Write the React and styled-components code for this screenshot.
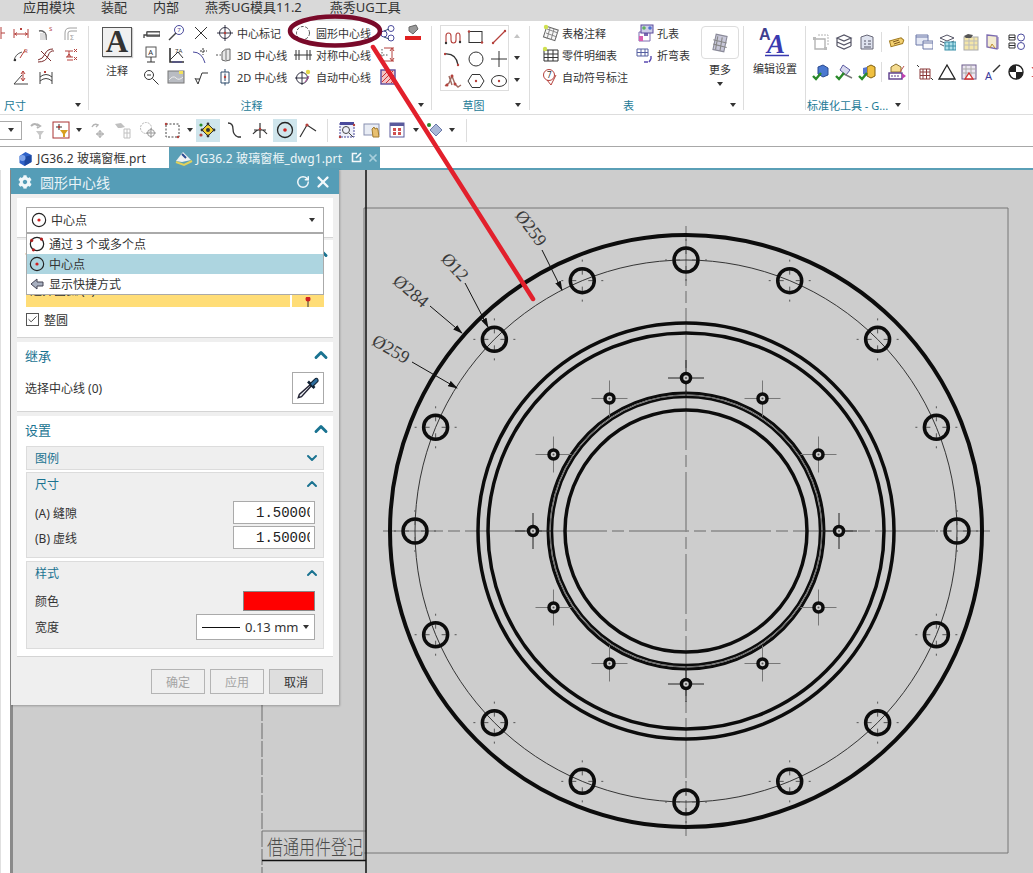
import React from "react";
import styled, { createGlobalStyle } from "styled-components";
import { FaCog } from "react-icons/fa";
import { RotateCw, X, Check, ChevronUp, ChevronDown } from "lucide-react";

const R = "#b5413c";
const B = "#4a4a9c";
const G = "#a0a0a0";
const D = "#333";
const P = "#7c6bb0";

const dot = (x, y, c = R, r = 1.2) => <circle cx={x} cy={y} r={r} fill={c} stroke="none" />;

const tableLines = (c) => (
  <path stroke={c} d="M2 4h14v11H2zM2 8h14M2 11.500h14M6 4v11M11 4v11" />
);

const ICONS = {
  dimCut: <path stroke={R} d="M14 3v12M14 9h4" />,
  dimX: <><path stroke={R} d="M2 5v9M16 5v9M2 10h14M3 10l2-1.500M3 10l2 1.500M15 10l-2-1.500M15 10l-2 1.500M8 4l2 2M10 4l-2 2" /></>,
  radS: <><path stroke="#666" strokeWidth="1.500" d="M2 7q5-1 7 4v5" /><path fill="#ddd" stroke="none" d="M3 9h5l1 7H3z" /><text x="12" y="7" fontSize="6" fill={R} stroke="none">S</text></>,
  chainGrey: <><path stroke={G} d="M3 16V9q0-5 5-5h7M6 16V9q0-2 3-2h6" /><text x="8" y="16" fontSize="7" fill={G} stroke="none">Σ</text></>,
  radR: <><path stroke="#555" d="M2 15q1-7 8-9" /><path stroke={R} d="M8 12l5-8" />{dot(3, 14, D)}<text x="12" y="7" fontSize="6" fill={R} stroke="none">R</text></>,
  wave: <><path stroke="#7a2a2a" d="M1 14q5-1 7-6t8-5M1 16q8 0 10-6t6-5M4 5l10 10" /></>,
  ordinate: <><path stroke={R} d="M3 5h8M7 5v6M4 11h7M5 14h6M5 11l2-3M9 11l-2-3" /><path stroke={R} d="M12 3l3 3M15 3l-3 3M12 11l3 3M15 11l-3 3" /></>,
  angle: <><path stroke="#444" d="M2 16L10 7M2 16h14" /><path stroke={R} d="M11 3v10M9 6l2-3 2 3M9 10l2 3 2-3" /></>,
  arcdim: <><path stroke="#444" d="M3 4v12M15 4v12M3 9q6-5 12 0M3 13q6-5 12 0" /><path stroke={R} d="M7 3l2 2M9 3l-2 2" /></>,
  leader: <><path stroke="#444" strokeWidth="1.300" d="M2 14v-3h3M5 8h13v4H5z" /><path fill="#fff" stroke="#444" d="M5 8h13v3H5z" /></>,
  balloon: <><circle cx="12" cy="6" r="4.500" stroke={B} /><path stroke="#444" strokeWidth="1.500" d="M2 16l7-7" /><text x="10.200" y="8" fontSize="6" fill={B} stroke="none">7</text></>,
  cross: <path stroke="#333" d="M3 3l12 12M15 3L3 15" />,
  boxA: <><rect x="4" y="1" width="10" height="10" stroke="#555" /><path stroke="#333" d="M9 11v5M5 16h8" /><text x="6.300" y="9" fontSize="7.500" fill="#333" stroke="none">A</text></>,
  angled: <><path stroke="#333" strokeWidth="1.600" d="M3 2v14h14" /><path stroke="#333" d="M3 14L11 6l5 6" /><path stroke={B} d="M5 16h10" /><text x="8" y="7" fontSize="6" fill={D} stroke="none">7A</text></>,
  arcCross: <><path stroke={B} d="M1 6q9 0 12 11" /><path stroke="#333" strokeDasharray="2 1" d="M11 2v7M8 5h7" /></>,
  magnify: <><circle cx="7" cy="7" r="4.500" stroke="#333" /><path stroke="#333" d="M5 7h4M10.500 10.500l6 6" /></>,
  image: <><rect x="1" y="3" width="16" height="12" fill="#b9bcc2" stroke="#777" /><path stroke="#eee" d="M2 12q4-5 7-2t7-1" /><rect x="12" y="3" width="4" height="3" fill="#f3e25b" stroke="none" /></>,
  surface: <path stroke="#333" d="M3 10l3 6 4-11h6M4 11h4" />,
  centerMark: <><circle cx="9" cy="9" r="5.500" stroke="#334" /><path stroke="#334" d="M9 1v16M1 9h16" />{dot(9, 9, R)}</>,
  center3d: <><path stroke="#555" strokeDasharray="2 1.500" d="M0 9h5" /><path fill="#e8e8e8" stroke="#666" d="M6 6q3-4 8-3v11q-5 2-8 0z" /><path stroke="#777" d="M10 4v10" /></>,
  center2d: <><path stroke="#2d4a6a" d="M5 4h8v11H5z" /><path stroke="#2d4a6a" strokeDasharray="3 1.500" d="M9 1v17" />{dot(9, 9, R)}</>,
  dashCircle: <circle cx="9" cy="9" r="6.500" stroke="#555" strokeDasharray="3 1.600" />,
  symLine: <path stroke="#333" d="M2 4v10M5 4v10M13 4v10M16 4v10M0 9h18" />,
  autoCenter: <><circle cx="8" cy="10" r="5.500" stroke="#334" /><path stroke="#334" d="M8 3v14M1 10h14" /><path stroke="#b04a9c" d="M11 14l4-6" />{dot(14, 4, "#e5d84a", 2.200)}</>,
  nodes: <><circle cx="5" cy="10" r="3" stroke={B} /><circle cx="12" cy="4.500" r="3" stroke={B} /><circle cx="12" cy="14" r="3" stroke={B} /><path stroke="#2d4a6a" d="M5 7l5-2M5 13l5 2" /></>,
  paint: <><path fill="#9a9a9a" stroke="#666" d="M5 3l7-2 2 4-5 5-4-3z" /><rect x="1" y="12" width="16" height="4" fill="#e02020" stroke="none" /></>,
  dimV: <><path stroke="#555" strokeDasharray="1.500 1.500" d="M3 3v14M1 9h8" /><path stroke={R} d="M5 2h10M5 15h10M13 2v13M11 5l2-3 2 3M11 12l2 3 2-3" /></>,
  hatch: <><rect x="2" y="2" width="14" height="14" fill="#f4c4c4" stroke="#5a4a9c" strokeWidth="1.400" /><path stroke="#d03030" d="M3 9l6-6M3 14l11-11M7 15l8-8M12 15l3-3" /></>,
  profile: <><path stroke={R} strokeWidth="1.100" d="M2 15V8q0-3 2.500-3T7 8v4q0 3 2.500 3t2.500-3V8q0-3 2-3t2 3v6" />{dot(2, 15, D)}{dot(16, 14, D)}</>,
  rect: <><rect x="2" y="3.500" width="13" height="11" stroke="#333" />{dot(2, 3.500)}{dot(15, 14.500)}</>,
  line: <><path stroke={R} strokeWidth="1.200" d="M3 15L15 3" />{dot(3, 15)}{dot(15, 3)}</>,
  arc: <><path stroke="#333" strokeWidth="1.300" d="M1 4q11-1 13 11" />{dot(1, 4)}{dot(14, 15)}</>,
  circle: <><circle cx="9" cy="9" r="7" stroke="#333" /></>,
  plus: <path stroke="#333" d="M9 1v16M1 9h16" />,
  spline: <><path stroke="#a06a60" strokeWidth="1.400" d="M1 14l4-3 3-7 3 8 3 3 3-2M5 4l3 9" />{dot(8, 4, R, 1.500)}{dot(3, 13, R, 1.500)}{dot(11, 12, R, 1.500)}</>,
  hexagon: <><path stroke="#333" d="M5 2.500h8L17 9l-4 6.500H5L1 9z" />{dot(9, 9)}</>,
  ellipse: <><ellipse cx="9" cy="9" rx="7.500" ry="5.500" stroke="#333" />{dot(9, 9)}</>,
  tableNote: <><path fill="#f7f7f7" stroke="#666" transform="rotate(18 9 9)" d="M3 4h12v11H3z" /><path stroke="#888" d="M5 5l11 4M4 9l11 4M8 4l-3 11M12 5l-3 11" />{dot(4, 3, "#cfe050", 2.200)}</>,
  partsList: <>{tableLines("#333")}{dot(3, 3, "#cfe050", 2.200)}</>,
  balloon7: <><circle cx="7" cy="7" r="5.500" stroke={R} /><path stroke={R} d="M5 12l4 5 5-10" /><text x="5" y="10" fontSize="8" fill="#333" stroke="none">7</text></>,
  holeTable: <><path fill="#fff" stroke={P} d="M3 8h11v9H3z" /><rect x="3" y="12" width="4" height="5" fill="#d860b0" stroke="none" /><rect x="8" y="8" width="4" height="4" fill="#7c6bb0" stroke="none" /><rect x="5" y="1" width="12" height="8" fill="#cfcfe8" stroke="#5a4a9c" />{dot(8, 4, "#60b060", 1.800)}{dot(14, 4, "#5070d0", 1.800)}</>,
  bendTable: <><path stroke="#555fa0" d="M1 3h11v7H1zM1 6.500h11M5 3v7M9 3v7" /><path stroke="#5a4ab0" strokeWidth="1.400" d="M15 10v3M15 13l-2 3M8 16h4" /></>,
  moreTable: <><path fill="#c7c7d8" stroke="#8a8a99" transform="rotate(12 9 9)" d="M4 2h10v14H4z" /><path stroke="#888" d="M3 6l12 3M3 10l12 3M7 3l-2 12M11 4l-2 12" /></>,
  std1: <><path stroke="#b4b4b4" strokeWidth="1.400" d="M3 6h10v10H3z" /><path stroke="#b4b4b4" strokeDasharray="2 1" d="M6 2h10v10" /><rect x="1" y="4" width="3" height="3" fill="#bbb" stroke="none" /><rect x="12" y="14" width="3" height="3" fill="#bbb" stroke="none" /></>,
  std2: <><path stroke="#556" strokeWidth="1.200" d="M2 5l7-3 7 3-7 3zM2 9l7 3 7-3M2 13l7 3 7-3M2 5v8M16 5v8" /></>,
  std3: <><path fill="#dfe3ef" stroke="#667" d="M3 4l6-2 6 2v12H3z" /><path stroke="#556" d="M6 8h2M10 8h3M6 11h2M10 11h3M6 14h7" /></>,
  std4: <><path fill="#f3d070" stroke="#a07a20" transform="rotate(-15 9 9)" d="M2 6h12l2 3-2 3H2z" /><path stroke="#805a20" d="M5 9l6-2M6 11l6-2" /></>,
  check1: <><path fill="#4a78d0" stroke="#2a4a90" d="M6 4l5-2 5 3v7l-5 2-5-3z" /><path stroke="#2a8a2a" strokeWidth="2.400" d="M1 13l3 3 5-6" /></>,
  check2: <><path fill="#d8d8ee" stroke="#5a5aa0" d="M8 2l7 5-4 5-6-5z" /><path stroke="#777" strokeWidth="1.500" d="M7 10l10 5" /><path stroke="#2a8a2a" strokeWidth="2.400" d="M1 13l3 3 5-6" /></>,
  check3: <><path fill="#f0c040" stroke="#806010" d="M9 4l4-2 4 2v9l-4 2-4-2z" /><path fill="#5a78d0" stroke="none" d="M5 5l4-1v9l-4-2z" /><path stroke="#2a8a2a" strokeWidth="2.400" d="M1 13l3 3 5-6" /></>,
  stdBox: <><path fill="#f5dc90" stroke="#8a7030" d="M3 4l5-3 5 3v5H3z" /><rect x="1" y="10" width="13" height="6" fill="#fff" stroke="#5a3a8a" strokeWidth="1.400" /><path stroke="#5a3a8a" strokeDasharray="2 1" d="M3 13h9" /><path fill="#c040b0" stroke="none" d="M14 10l4 3-4 3z" /><path stroke="#c05050" d="M12 9l4-6" /></>,
  windows: <><path fill="#e4e8f4" stroke="#6d78a8" d="M1 2h12v10H1z" /><path fill="#f8f8fb" stroke="#6d78a8" d="M8 8h10v8H8z" /><path stroke="#6d78a8" d="M1 4h12M8 10h10" /></>,
  stackTeal: <><path stroke="#556" d="M2 5l7-3 7 3-7 3zM2 8l7 3 7-3M2 11l4 2" /><rect x="7" y="9" width="11" height="8" fill="#aee0ea" stroke="#3a90a8" /><path stroke="#3a90a8" d="M7 13h11M11 9v8M15 9v8" /></>,
  yellowTable: <><rect x="3" y="4" width="14" height="13" fill="#f4e6a8" stroke="#aaa" /><path stroke="#bbb" d="M3 8h14M3 12h14M8 4v13M13 4v13" /><path fill="#555" stroke="none" d="M3 3l4-2 5 1-2 3-5 0z" /></>,
  bookmark: <><path fill="#f4ecd0" stroke={P} strokeWidth="1.300" d="M3 2l10 1v13l-10-2z" /><path stroke="#c09030" d="M6 15l2-4 3 4" /><path stroke={P} d="M14 4v12" /></>,
  oneTwo: <><circle cx="14" cy="4.500" r="3.500" stroke={B} /><circle cx="14" cy="13" r="3.500" stroke={B} /><path stroke="#333" d="M2 2h6v5H2zM2 4.500h6M2 10h6v5H2zM2 12.500h6" /></>,
  gridXY: <><path stroke="#8a3a3a" d="M5 6h10v10H5zM5 9h10M5 12.500h10M8 6v10M11.500 6v10" /><path stroke="#333" d="M2 2l2 2M16 15l2 2" /></>,
  triangle: <path stroke="#222" strokeWidth="1.300" d="M9 2l8 14H1z" />,
  tableTri: <><rect x="1" y="2" width="14" height="14" fill="#ece6f2" stroke="#6a5a8a" /><path stroke="#aaa" d="M1 6h14M1 10h14M5 2v14M10 2v14" /><path stroke="#d03030" strokeWidth="1.300" fill="#fff" d="M8 10l4 6H4z" /></>,
  aArrow: <><text x="1" y="17" fontSize="11" fill="#3a3a9c" stroke="none">A</text><path stroke="#333" strokeWidth="1.400" d="M9 9l7-7" /></>,
  halfDisc: <><circle cx="9" cy="9" r="7" fill="#fff" stroke="#222" strokeWidth="1.400" /><path fill="#222" stroke="none" d="M9 2a7 7 0 0 0-7 7h7zM9 9h7a7 7 0 0 1-7 7z" /></>,
  redCut: <path stroke="#d03030" strokeDasharray="2 1.500" d="M2 4l6 10M8 4L2 14" />,
  funnelGrey: <><path stroke="#b4b4b4" strokeWidth="2" d="M3 5q4-4 7 0M9 3l3 2-3 2" /><path fill="#c8c8c8" stroke="none" d="M8 10h8l-3 4v4h-2v-4z" /></>,
  filterBox: <><rect x="1" y="1" width="16" height="16" fill="#fff" stroke="#a33" /><path stroke="#333" d="M7 3v6M4 6h6" />{dot(7, 6)}<path fill="#d8a020" stroke="none" d="M8 9h8l-3 4v3h-2v-3z" /></>,
  greyCross: <><path stroke="#b4b4b4" strokeWidth="1.400" d="M4 6q2-4 6-2l-2 2M12 9v8M8 13h8" /><circle cx="12" cy="13" r="2.500" stroke="#b4b4b4" /></>,
  greyStamp: <><path fill="#c0c0c0" stroke="none" d="M1 3l6-1 4 4-4 1-3 0z" /><path stroke="#c0c0c0" d="M10 8h6v9h-6zM10 12h6M13 8v9" /></>,
  greyDash: <><circle cx="7" cy="7" r="5.500" stroke="#b4b4b4" strokeDasharray="2 1" /><circle cx="12" cy="12" r="3.500" stroke="#999" /><path stroke="#999" d="M12 7v10M7 12h10" /></>,
  dashBox: <><rect x="3" y="3" width="13" height="13" stroke="#444" strokeDasharray="2 1.500" />{dot(3, 3)}{dot(15, 16)}</>,
  snapPts: <><path fill="#f2d030" stroke="#333" d="M9 3l6 6-6 6-6-6z" /><circle cx="9" cy="9" r="2" fill="#333" stroke="none" />{dot(2, 4, "#2a8a2a", 1.600)}{dot(2, 14, R, 1.600)}<circle cx="9" cy="3" r="1.400" fill="#333" stroke="none" /><circle cx="15" cy="9" r="1.400" fill="#333" stroke="none" /><circle cx="9" cy="15" r="1.400" fill="#333" stroke="none" /><circle cx="3" cy="9" r="1.400" fill="#333" stroke="none" /></>,
  tangent: <path stroke="#333" strokeWidth="1.300" d="M3 2q5 0 5 6t5 8h3" />,
  arcCenter: <><path stroke="#333" strokeWidth="1.200" d="M2 13q7-9 14 0M9 2v15M3 9h12" />{dot(9, 8)}</>,
  circlePt: <><circle cx="9" cy="9" r="7.500" stroke="#222" strokeWidth="1.300" />{dot(9, 9, "#d02020", 1.800)}</>,
  vertexPt: <><path stroke="#333" strokeWidth="1.200" d="M1 16L8 4l9 6" />{dot(8, 4, R, 1.600)}</>,
  zoomSel: <><rect x="2" y="2" width="14" height="14" fill="#eef0fa" stroke="#4a4a9c" strokeDasharray="2 1" /><path fill="#4a4a9c" stroke="none" d="M2 1h14v3H2z" /><circle cx="8" cy="9" r="3.500" stroke="#444" /><path stroke="#444" d="M11 12l4 4" />{dot(16, 4)}{dot(2, 16)}</>,
  handWin: <><rect x="1" y="3" width="15" height="11" fill="#e8ecf4" stroke="#8890b0" /><path fill="#e8c070" stroke="#a07a30" d="M9 8l2-2 1 2 2-1 1 2 1 7h-6z" /></>,
  gridWin: <><rect x="2" y="2" width="14" height="14" fill="#fff" stroke="#5a5a9c" /><path fill="#5a5a9c" stroke="none" d="M2 2h14v3H2z" /><path fill="#d05050" stroke="none" d="M5 7h3v3H5zM10 7h3v3h-3zM5 11h3v3H5zM10 11h3v3h-3z" /></>,
  eraser: <><path fill="#aab8d8" stroke="#6a78a8" d="M4 9l6-6 6 6-6 6z" />{dot(3, 4, "#2a8a2a", 2)}</>,
};

const GlobalStyle = createGlobalStyle`
  html, body {
    margin: 0;
    padding: 0;
    background: #fff;
  }
  * {
    box-sizing: border-box;
  }
`;

const Page = styled.div`
  position: relative;
  width: 1033px;
  height: 873px;
  overflow: hidden;
  display: flex;
  flex-direction: column;
  background: #fff;
  color: #333;
  font-family: "Noto Sans", "Noto Sans CJK SC", sans-serif;
  font-size: 11px;
`;

const MenuBar = styled.div`
  height: 21px;
  flex: none;
  background: #d9d9d9;
  display: flex;
  gap: 26px;
  padding-left: 23px;
  font-size: 13px;
  line-height: 14px;
  white-space: nowrap;
`;

const MenuItem = styled.span`
  margin-left: ${(p) => p.$ml || 0}px;
`;

const Ribbon = styled.div`
  height: 94px;
  flex: none;
  display: flex;
  border-bottom: 1px solid #ddd;
`;

const Group = styled.div`
  width: ${(p) => p.$w}px;
  flex: none;
  display: flex;
  flex-direction: column;
  overflow: hidden;
  position: relative;
  &:not(:last-child)::after {
    content: "";
    position: absolute;
    right: 0;
    top: 5px;
    bottom: 4px;
    width: 1px;
    background: #ddd;
  }
`;

const GroupBody = styled.div`
  height: 75px;
  flex: none;
  display: flex;
  padding-left: ${(p) => p.$pl || 0}px;
`;

const LabelRow = styled.div`
  height: 18px;
  display: flex;
  align-items: center;
  padding-right: ${(p) => p.$pr || 8}px;
`;

const GroupLabel = styled.div`
  flex: 1;
  color: #1c7a96;
  white-space: nowrap;
  text-align: ${(p) => (p.$left ? "left" : "center")};
  padding-left: ${(p) => p.$pl || 0}px;
  padding-right: ${(p) => p.$shift || 0}px;
`;

const Tri = styled.span`
  width: 0;
  height: 0;
  flex: none;
  display: inline-block;
  margin-top: ${(p) => p.$mt || 0}px;
  margin-right: ${(p) => p.$mr || 0}px;
  border-left: 3.5px solid transparent;
  border-right: 3.5px solid transparent;
  border-top: ${(p) => (p.$up ? "0" : "4px solid " + (p.$c || "#333"))};
  border-bottom: ${(p) => (p.$up ? "4px solid " + (p.$c || "#333") : "0")};
`;

const IconSvg = styled.svg`
  display: block;
  flex: none;
`;

const Icon = ({ n, s = 18 }) => (
  <IconSvg width={s} height={s} viewBox="0 0 18 18" fill="none" stroke="#333">
    {ICONS[n]}
  </IconSvg>
);

const IconGrid = styled.div`
  display: grid;
  grid-template-columns: repeat(${(p) => p.$cols}, ${(p) => p.$cw || 25}px);
  grid-auto-rows: 22px;
  margin-top: 1px;
  margin-left: ${(p) => p.$ml || 0}px;
  align-self: flex-start;
`;

const Cell = styled.div`
  display: flex;
  align-items: center;
  justify-content: center;
`;

const TextColumn = styled.div`
  width: ${(p) => p.$w}px;
  flex: none;
  display: grid;
  grid-auto-rows: 22px;
  margin-top: 1px;
  margin-left: ${(p) => p.$ml || 0}px;
  align-self: flex-start;
`;

const TextButton = styled.div`
  display: flex;
  align-items: center;
  gap: ${(p) => p.$gap || 3}px;
  white-space: nowrap;
`;

const BigButton = styled.div`
  width: ${(p) => p.$w}px;
  flex: none;
  display: flex;
  flex-direction: column;
  align-items: center;
  padding-top: 6px;
`;

const BigLabel = styled.div`
  margin-top: ${(p) => p.$mt || 6}px;
  line-height: 15px;
  white-space: nowrap;
`;

const LetterBox = styled.div`
  width: 30px;
  height: 30px;
  flex: none;
  border: 1px solid #555;
  background: #f0f0f0;
  box-shadow: 1px 1px 1px #ccc;
  display: flex;
  align-items: center;
  justify-content: center;
  font-family: "Liberation Serif", serif;
  font-weight: bold;
  font-size: 31px;
  line-height: 30px;
  color: #333;
`;

const SketchBox = styled.div`
  margin: 4px 0 0 8px;
  width: 69px;
  height: 66px;
  border: 1px solid #ddd;
  display: grid;
  grid-template-columns: repeat(3, 23px);
  grid-auto-rows: 22px;
  flex: none;
`;

const Spinner = styled.div`
  width: 16px;
  margin-top: 4px;
  display: grid;
  grid-auto-rows: 22px;
  justify-items: center;
  align-items: center;
`;

const MoreBox = styled.div`
  width: 38px;
  height: 33px;
  flex: none;
  border: 1px solid #ddd;
  border-radius: 4px;
  display: flex;
  align-items: center;
  justify-content: center;
`;

const MoreButton = styled.div`
  width: 38px;
  flex: none;
  margin: 5px 0 0 6px;
  display: flex;
  flex-direction: column;
  align-items: center;
`;

const IconRows = styled.div`
  display: grid;
  grid-template-rows: 30px 30px;
  padding-top: 6px;
`;

const IconRow = styled.div`
  display: flex;
  align-items: center;
`;

const SlotIcon = styled.div`
  width: ${(p) => p.$w || 23}px;
  flex: none;
  display: flex;
  justify-content: center;
`;

const RowSep = styled.div`
  width: 1px;
  height: 20px;
  background: #ddd;
  margin: 0 6px 0 3px;
  flex: none;
`;

const Toolbar = styled.div`
  height: 32px;
  flex: none;
  display: flex;
  align-items: center;
  border-bottom: 1px solid #a8a8a8;
  padding-bottom: 1px;
`;

const ComboStub = styled.div`
  width: 22px;
  height: 19px;
  flex: none;
  margin-right: 4px;
  border: 1px solid #aaa;
  border-left: 0;
  display: flex;
  align-items: center;
  justify-content: center;
`;

const ToolCell = styled.div`
  width: ${(p) => p.$w}px;
  height: 23px;
  flex: none;
  display: flex;
  align-items: center;
  justify-content: center;
  background: ${(p) => (p.$on ? "#cfe5ec" : "transparent")};
`;

const ToolSep = styled.div`
  width: ${(p) => p.$w}px;
  height: 23px;
  flex: none;
  display: flex;
  justify-content: center;
  &::before {
    content: "";
    width: 1px;
    background: #ddd;
  }
`;

const TabStrip = styled.div`
  height: 21px;
  flex: none;
  display: flex;
  padding-left: 10px;
  font-size: 12px;
  letter-spacing: 0.15px;
  white-space: nowrap;
`;

const Tab = styled.div`
  width: ${(p) => p.$w}px;
  height: 21px;
  flex: none;
  display: flex;
  align-items: center;
  padding-left: ${(p) => p.$pl}px;
  gap: 3px;
  background: ${(p) => (p.$active ? "#5a9fb6" : "#fff")};
  color: ${(p) => (p.$active ? "#eef6f8" : "#333")};
`;

const TabClose = styled.div`
  margin-left: 6px;
  display: flex;
  align-items: center;
  gap: 5px;
  color: #a8cfdc;
`;

const TabLine = styled.div`
  height: 2px;
  flex: none;
  margin-left: 10px;
  background: #5a9fb6;
`;

const Workspace = styled.div`
  flex: 1;
  display: flex;
  min-height: 0;
`;

const LeftStrip = styled.div`
  width: 13px;
  flex: none;
  background: #fff;
  border-left: 1px solid #e0e0e0;
  border-right: 3px solid #8a8a8a;
`;

const Canvas = styled.div`
  flex: 1;
  background: #cdcdcd;
`;

const DrawingSvg = styled.svg`
  display: block;
`;

const DimText = styled.text`
  font-family: "Liberation Serif", serif;
  font-size: 18px;
  fill: #3a3a3a;
  text-anchor: middle;
  dominant-baseline: central;
`;

const StampText = styled.text`
  font-family: "Noto Sans CJK SC", sans-serif;
  font-weight: 300;
  font-size: 16px;
  fill: #4a4a4a;
`;

const Overlay = styled.svg`
  position: absolute;
  left: 0;
  top: 0;
  pointer-events: none;
`;

const Dialog = styled.div`
  position: absolute;
  left: 11px;
  top: 169px;
  width: 328px;
  height: 536px;
  background: #efefef;
  box-shadow: 1px 1px 2px rgba(0, 0, 0, 0.25);
  display: flex;
  flex-direction: column;
  font-size: 12px;
`;

const TitleBar = styled.div`
  height: 25px;
  flex: none;
  background: #559db7;
  color: #eaf4f7;
  display: flex;
  align-items: center;
  padding: 0 7px 0 7px;
  font-size: 14px;
`;

const TitleText = styled.div`
  margin-left: 8px;
  flex: 1;
`;

const ResetIcon = styled(RotateCw)`
  margin-right: 4px;
`;

const DialogBody = styled.div`
  flex: 1;
  padding: 4px 6px 0;
  display: flex;
  flex-direction: column;
`;

const Card = styled.div`
  background: #fff;
  margin-bottom: ${(p) => p.$mb ?? 4}px;
  height: ${(p) => p.$h}px;
  flex: none;
  border-bottom: 1px solid #d4d4d4;
  padding-top: ${(p) => p.$pt || 0}px;
`;

const CardHeader = styled.div`
  height: 26px;
  display: flex;
  align-items: center;
  justify-content: space-between;
  padding: 0 2px 0 8px;
  font-size: 13px;
  color: #1a7391;
`;

const ComboWrap = styled.div`
  position: relative;
  margin: 0 9px;
`;

const Combo = styled.div`
  height: 26px;
  border: 1px solid #aaa;
  display: flex;
  align-items: center;
  gap: 4px;
  padding: 0 4px;
  background: #fff;
`;

const ComboText = styled.div`
  flex: 1;
`;

const Popup = styled.div`
  position: absolute;
  left: 0;
  top: 26px;
  width: 298px;
  background: #fff;
  border: 1px solid #aaa;
  z-index: 2;
`;

const PopupRow = styled.div`
  height: 20px;
  display: flex;
  align-items: center;
  gap: 4px;
  padding-left: 2px;
  background: ${(p) => (p.$on ? "#add5e0" : "#fff")};
`;

const SelectRow = styled.div`
  display: flex;
  gap: 2px;
  margin: 17px 9px 6px;
  height: 24px;
`;

const SelectMain = styled.div`
  flex: 1;
  background: #ffdd77;
  display: flex;
  align-items: flex-start;
  gap: 4px;
  padding: 0 0 0 4px;
  line-height: 15px;
`;

const SelectPin = styled.div`
  width: 32px;
  background: #ffdd77;
  display: flex;
  align-items: flex-end;
  justify-content: center;
`;

const CheckRow = styled.div`
  display: flex;
  align-items: center;
  gap: 5px;
  margin-left: 9px;
  height: 13px;
`;

const CheckBox = styled.div`
  width: 13px;
  height: 13px;
  border: 1px solid #555;
  display: flex;
  align-items: center;
  justify-content: center;
`;

const PickRow = styled.div`
  display: flex;
  align-items: center;
  justify-content: space-between;
  margin: 4px 9px 0 8px;
  height: 32px;
`;

const PickButton = styled.div`
  width: 32px;
  height: 32px;
  border: 1px solid #aaa;
  display: flex;
  align-items: center;
  justify-content: center;
`;

const Sub = styled.div`
  margin: ${(p) => p.$mt || 0}px 9px 0;
  height: ${(p) => p.$h}px;
  background: #efefef;
  border: 1px solid #dcdcdc;
`;

const SubHeader = styled.div`
  height: 22px;
  display: flex;
  align-items: center;
  justify-content: space-between;
  padding: 0 3px 0 8px;
  font-size: 12px;
  color: #1a7391;
`;

const FieldRow = styled.div`
  display: flex;
  align-items: center;
  justify-content: space-between;
  padding: 0 8px;
  height: ${(p) => p.$h}px;
  margin-top: ${(p) => p.$mt || 0}px;
`;

const NumberBox = styled.div`
  width: 82px;
  height: 23px;
  border: 1px solid #aaa;
  background: #fff;
  padding: 0 4px 0 22px;
  display: flex;
  align-items: center;
`;

const NumberValue = styled.div`
  overflow: hidden;
  white-space: nowrap;
  font-family: "Liberation Mono", monospace;
  font-size: 14px;
  color: #222;
`;

const Swatch = styled.div`
  width: 72px;
  height: 20px;
  background: #ff0000;
  border: 1px solid #888;
`;

const WidthSelect = styled.div`
  width: 119px;
  height: 26px;
  border: 1px solid #aaa;
  background: #fff;
  display: flex;
  align-items: center;
  padding: 0 5px;
  font-size: 13px;
`;

const WidthLine = styled.div`
  width: 38px;
  height: 1px;
  background: #111;
  margin-right: 5px;
`;

const WidthText = styled.div`
  flex: 1;
`;

const Footer = styled.div`
  display: flex;
  justify-content: flex-end;
  gap: 5px;
  padding: 8px 10px 0 0;
`;

const FootButton = styled.div`
  width: 54px;
  height: 25px;
  border: 1px solid #b4b4b4;
  background: ${(p) => (p.$on ? "#dedede" : "#efefef")};
  color: ${(p) => (p.$on ? "#333" : "#a4a4a4")};
  display: flex;
  align-items: center;
  justify-content: center;
`;

const toolItems = [
  ["funnelGrey", 22], ["filterBox", 26], ["drop", 9], ["greyCross", 28], ["greyStamp", 24], ["greyDash", 25],
  ["dashBox", 24], ["drop", 12], ["snapPts", 24, true], ["tangent", 27], ["arcCenter", 26], ["circlePt", 24, true],
  ["vertexPt", 22], ["sep", 16], ["zoomSel", 24], ["handWin", 26], ["gridWin", 24], ["drop", 14], ["eraser", 24], ["drop", 10], ["sep", 18],
];

const Grid = ({ cols, cw, ml, items }) => (
  <IconGrid $cols={cols} $cw={cw} $ml={ml}>
    {items.map((n, i) => (
      <Cell key={i}>{n && <Icon n={n} />}</Cell>
    ))}
  </IconGrid>
);

const Action = ({ n, children, gap }) => (
  <TextButton $gap={gap}>
    <Icon n={n} />
    <span>{children}</span>
  </TextButton>
);

const GLabel = ({ children, left, pl, pr, shift }) => (
  <LabelRow $pr={pr}>
    <GroupLabel $left={left} $pl={pl} $shift={shift}>{children}</GroupLabel>
    <Tri />
  </LabelRow>
);

const CX = 686;
const CY = 531;
const polar = (r, deg) => [CX + r * Math.sin((deg * Math.PI) / 180), CY - r * Math.cos((deg * Math.PI) / 180)];
const bigHoles = Array.from({ length: 16 }, (_, i) => polar(271, i * 22.5));
const smallHoles = Array.from({ length: 12 }, (_, i) => polar(153, i * 30));

const Drawing = () => (
  <DrawingSvg width="1020" height="703" viewBox="13 170 1020 703" fill="none">
    <defs>
      <marker id="tip" markerWidth="10" markerHeight="6" refX="9" refY="3" orient="auto" markerUnits="userSpaceOnUse">
        <path d="M0 0L10 3L0 6z" fill="#111" />
      </marker>
    </defs>
    <path d="M262 705V873" stroke="#8c8c8c" strokeWidth="1.500" strokeDasharray="16 2" />
    <path d="M262 831H366M364 853H1008V208H364V860" stroke="#777" />
    <path d="M262 860.500H366M366 170V873" stroke="#111" strokeWidth="1.500" />
    <StampText transform="translate(267 855) scale(1 1.300)">借通用件登记</StampText>

    <path d="M383 531H990" stroke="#8a8a8a" strokeWidth="1.500" strokeDasharray="60 5 12 5" />
    <path d="M686 226V836" stroke="#8a8a8a" strokeWidth="1.500" strokeDasharray="60 5 12 5" />

    <circle cx={CX} cy={CY} r="296" stroke="#0c0c0c" strokeWidth="4" />
    <circle cx={CX} cy={CY} r="271" stroke="#222" strokeWidth="0.900" />
    <circle cx={CX} cy={CY} r="208" stroke="#0c0c0c" strokeWidth="3.500" />
    <circle cx={CX} cy={CY} r="198" stroke="#0c0c0c" strokeWidth="3.500" />
    <circle cx={CX} cy={CY} r="138" stroke="#0c0c0c" strokeWidth="3" />
    <circle cx={CX} cy={CY} r="136" stroke="#666" strokeWidth="1" />
    <circle cx={CX} cy={CY} r="134" stroke="#0c0c0c" strokeWidth="2.500" />
    <circle cx={CX} cy={CY} r="121" stroke="#0c0c0c" strokeWidth="3.500" />

    {bigHoles.map(([x, y], i) => (
      <g key={i}>
        <path d={`M${x - 12} ${y}h6M${x + 6} ${y}h6M${x} ${y - 12}v6M${x} ${y + 6}v6`} stroke="#555" />
        <circle cx={x} cy={y} r="12" stroke="#0c0c0c" strokeWidth="3.500" />
        <path d={`M${x - 21} ${y}h2M${x + 19} ${y}h2M${x} ${y - 21}v2M${x} ${y + 19}v2`} stroke="#555" />
      </g>
    ))}
    {smallHoles.map(([x, y], i) => (
      <g key={i}>
        <path d={`M${x - 18} ${y}h36M${x} ${y - 18}v36`} stroke={i % 3 === 0 ? "#222" : "#777"} />
        <circle cx={x} cy={y} r="4.500" fill="#cdcdcd" stroke="#0c0c0c" strokeWidth="3.500" />
        <circle cx={x} cy={y} r="1" fill="#555" />
      </g>
    ))}

    <path d="M542 250L562 290" stroke="#111" markerEnd="url(#tip)" />
    <path d="M465 283L488 327" stroke="#111" markerEnd="url(#tip)" />
    <path d="M430 306L462 333" stroke="#111" markerEnd="url(#tip)" />
    <path d="M412 362L457 388" stroke="#111" markerEnd="url(#tip)" />
    <DimText x="531" y="228" transform="rotate(53 531 228)">Ø259</DimText>
    <DimText x="455" y="267" transform="rotate(48 455 267)">Ø12</DimText>
    <DimText x="411" y="291" transform="rotate(40 411 291)">Ø284</DimText>
    <DimText x="391" y="349" transform="rotate(30 391 349)">Ø259</DimText>
  </DrawingSvg>
);

const App = () => (
  <Page>
    <GlobalStyle />
    <MenuBar>
      <MenuItem>应用模块</MenuItem>
      <MenuItem>装配</MenuItem>
      <MenuItem>内部</MenuItem>
      <MenuItem>燕秀UG模具11.2</MenuItem>
      <MenuItem $ml={2}>燕秀UG工具</MenuItem>
    </MenuBar>

    <Ribbon>
      <Group $w={89}>
        <GroupBody>
          <Grid cols={4} ml={-17} items={["dimCut", "dimX", "radS", "chainGrey", null, "radR", "wave", "ordinate", null, "angle", "arcdim", null]} />
        </GroupBody>
        <GLabel left pl={4}>尺寸</GLabel>
      </Group>

      <Group $w={343}>
        <GroupBody $pl={13}>
          <BigButton $w={30}>
            <LetterBox>A</LetterBox>
            <BigLabel>注释</BigLabel>
          </BigButton>
          <Grid cols={3} ml={6} items={["leader", "balloon", "cross", "boxA", "angled", "arcCross", "magnify", "image", "surface"]} />
          <TextColumn $w={78} $ml={3}>
            <Action n="centerMark">中心标记</Action>
            <Action n="center3d">3D 中心线</Action>
            <Action n="center2d">2D 中心线</Action>
          </TextColumn>
          <TextColumn $w={81}>
            <Action n="dashCircle" gap={4}>圆形中心线</Action>
            <Action n="symLine" gap={4}>对称中心线</Action>
            <Action n="autoCenter" gap={4}>自动中心线</Action>
          </TextColumn>
          <Grid cols={2} items={["nodes", "paint", "dimV", null, "hatch", null]} />
        </GroupBody>
        <GLabel shift={4}>注释</GLabel>
      </Group>

      <Group $w={98}>
        <GroupBody>
          <SketchBox>
            {["profile", "rect", "line", "arc", "circle", "plus", "spline", "hexagon", "ellipse"].map((n) => (
              <Cell key={n}><Icon n={n} /></Cell>
            ))}
          </SketchBox>
          <Spinner>
            <Tri $up $c="#c4c4c4" />
            <Tri />
            <Tri />
          </Spinner>
        </GroupBody>
        <GLabel pr={9}>草图</GLabel>
      </Group>

      <Group $w={214}>
        <GroupBody $pl={12}>
          <TextColumn $w={94}>
            <Action n="tableNote" gap={2}>表格注释</Action>
            <Action n="partsList" gap={2}>零件明细表</Action>
            <Action n="balloon7" gap={2}>自动符号标注</Action>
          </TextColumn>
          <TextColumn $w={59}>
            <Action n="holeTable" gap={3}>孔表</Action>
            <Action n="bendTable" gap={3}>折弯表</Action>
          </TextColumn>
          <MoreButton>
            <MoreBox><Icon n="moreTable" s={20} /></MoreBox>
            <BigLabel $mt={3}>更多</BigLabel>
            <Tri $mt={5} />
          </MoreButton>
        </GroupBody>
        <GLabel shift={3}>表</GLabel>
      </Group>

      <Group $w={62}>
        <GroupBody>
          <BigButton $w={62}>
            <svg width="32" height="30" viewBox="0 0 32 30">
              <text x="0" y="13" fontSize="16" fontWeight="bold" fontFamily="Liberation Sans" fill="#3f3f8f">A</text>
              <text x="8" y="26" fontSize="27" fontWeight="bold" fontStyle="italic" fontFamily="Liberation Serif" fill="#3a3ab0">A</text>
              <path d="M6 28.500h24" stroke="#3a3ab0" strokeWidth="1.500" />
            </svg>
            <BigLabel $mt={4}>编辑设置</BigLabel>
          </BigButton>
        </GroupBody>
      </Group>

      <Group $w={103}>
        <GroupBody $pl={3}>
          <IconRows>
            <IconRow>
              <SlotIcon><Icon n="std1" /></SlotIcon>
              <SlotIcon><Icon n="std2" /></SlotIcon>
              <SlotIcon><Icon n="std3" /></SlotIcon>
              <RowSep />
              <Icon n="std4" />
            </IconRow>
            <IconRow>
              <SlotIcon><Icon n="check1" /></SlotIcon>
              <SlotIcon><Icon n="check2" /></SlotIcon>
              <SlotIcon><Icon n="check3" /></SlotIcon>
              <RowSep />
              <Icon n="stdBox" />
            </IconRow>
          </IconRows>
        </GroupBody>
        <GLabel left pl={1}>标准化工具 - G...</GLabel>
      </Group>

      <Group $w={124}>
        <GroupBody $pl={3}>
          <IconRows>
            <IconRow>
              {["windows", "stackTeal", "yellowTable", "bookmark", "oneTwo"].map((n) => (
                <SlotIcon key={n}><Icon n={n} /></SlotIcon>
              ))}
            </IconRow>
            <IconRow>
              {["gridXY", "triangle", "tableTri", "aArrow", "halfDisc", "redCut"].map((n) => (
                <SlotIcon key={n}><Icon n={n} /></SlotIcon>
              ))}
            </IconRow>
          </IconRows>
        </GroupBody>
      </Group>
    </Ribbon>

    <Toolbar>
      <ComboStub><Tri /></ComboStub>
      {toolItems.map(([n, w, on], i) => {
        if (n === "sep") return <ToolSep key={i} $w={w} />;
        return (
          <ToolCell key={i} $w={w} $on={on}>
            {n === "drop" ? <Tri /> : <Icon n={n} />}
          </ToolCell>
        );
      })}
    </Toolbar>

    <TabStrip>
      <Tab $w={159} $pl={5}>
        <svg width="19" height="18" viewBox="0 0 18 18">
          <path d="M4 7l6-4 6 3v7l-7 4-5-3z" fill="#2f62c8" />
          <path d="M9 8l7-2v7l-7 4z" fill="#1d48a0" />
          <circle cx="7" cy="9" r="3" fill="#7ea4ea" />
        </svg>
        JG36.2 玻璃窗框.prt
      </Tab>
      <Tab $w={211} $pl={6} $active>
        <svg width="18" height="18" viewBox="0 0 18 18">
          <path d="M1 12L8 3l8 8-9 2z" fill="#f2f2f2" />
          <path d="M1 13l8 3 8-4" stroke="#e2d25a" strokeWidth="2" fill="none" />
          <path d="M7 5l4 4" stroke="#2a4a90" strokeWidth="2" />
        </svg>
        JG36.2 玻璃窗框_dwg1.prt
        <TabClose>
          <svg width="11" height="11" viewBox="0 0 11 11" fill="none" stroke="#f4f8fa" strokeWidth="1.600">
            <path d="M6 1.500H1.500v8h8V5M5 6l5-5" />
          </svg>
          <X size={12} strokeWidth={3.500} color="#a8cfdc" />
        </TabClose>
      </Tab>
    </TabStrip>
    <TabLine />

    <Workspace>
      <LeftStrip />
      <Canvas>
        <Drawing />
      </Canvas>
    </Workspace>

    <Dialog>
      <TitleBar>
        <FaCog size={14} color="#f0f7fa" />
        <TitleText>圆形中心线</TitleText>
        <ResetIcon size={14} strokeWidth={2.600} color="#f0f7fa" />
        <X size={18} strokeWidth={3} color="#f4f9fb" />
      </TitleBar>
      <DialogBody>
        <Card $h={40} $mb={2} $pt={9}>
          <ComboWrap>
            <Combo>
              <Icon n="circlePt" s={16} />
              <ComboText>中心点</ComboText>
              <Tri $mr={4} />
            </Combo>
            <Popup>
              <PopupRow>
                <svg width="16" height="16" viewBox="0 0 18 18" fill="none">
                  <circle cx="9" cy="9" r="7.500" stroke="#222" strokeWidth="1.400" />
                  <circle cx="3" cy="5" r="1.800" fill="#b02020" />
                  <circle cx="14" cy="3.500" r="1.800" fill="#b02020" />
                  <circle cx="5" cy="15.500" r="1.800" fill="#b02020" />
                </svg>
                通过 3 个或多个点
              </PopupRow>
              <PopupRow $on>
                <Icon n="circlePt" s={16} />
                中心点
              </PopupRow>
              <PopupRow>
                <svg width="16" height="12" viewBox="0 0 16 12">
                  <path d="M2 6l6-5v3h6v4H8v3z" fill="#a8b0c0" stroke="#445" />
                </svg>
                显示快捷方式
              </PopupRow>
            </Popup>
          </ComboWrap>
        </Card>

        <Card $h={98}>
          <CardHeader>
            位置
            <ChevronUp size={20} strokeWidth={3.500} color="#1a7391" />
          </CardHeader>
          <SelectRow>
            <SelectMain>选择圆弧 (0)</SelectMain>
            <SelectPin>
              <svg width="10" height="10" viewBox="0 0 10 10" fill="none">
                <path d="M5 0v10" stroke="#333" />
                <circle cx="5" cy="2" r="2.500" fill="#d02020" />
              </svg>
            </SelectPin>
          </SelectRow>
          <CheckRow>
            <CheckBox><Check size={11} strokeWidth={2} color="#333" /></CheckBox>
            整圆
          </CheckRow>
        </Card>

        <Card $h={70}>
          <CardHeader>
            继承
            <ChevronUp size={20} strokeWidth={3.500} color="#1a7391" />
          </CardHeader>
          <PickRow>
            选择中心线 (0)
            <PickButton>
              <svg width="26" height="26" viewBox="0 0 24 24" fill="none">
                <path d="M15 8L4 18l-1 3 3-1L16 9z" fill="#eef2f6" stroke="#223" strokeWidth="1.300" />
                <path d="M12 6l6 6" stroke="#123" strokeWidth="2.400" />
                <path d="M14 8l4-4q2-2 3 0t-1 3l-4 4z" fill="#2f6f9f" stroke="#123" />
              </svg>
            </PickButton>
          </PickRow>
        </Card>

        <Card $h={241}>
          <CardHeader>
            设置
            <ChevronUp size={20} strokeWidth={3.500} color="#1a7391" />
          </CardHeader>
          <Sub $mt={4} $h={24}>
            <SubHeader>
              图例
              <ChevronDown size={16} strokeWidth={3} color="#1a7391" />
            </SubHeader>
          </Sub>
          <Sub $mt={2} $h={86}>
            <SubHeader>
              尺寸
              <ChevronUp size={16} strokeWidth={3} color="#1a7391" />
            </SubHeader>
            <FieldRow $h={23} $mt={6}>
              (A) 缝隙
              <NumberBox><NumberValue>1.50000</NumberValue></NumberBox>
            </FieldRow>
            <FieldRow $h={23} $mt={2}>
              (B) 虚线
              <NumberBox><NumberValue>1.50000</NumberValue></NumberBox>
            </FieldRow>
          </Sub>
          <Sub $mt={3} $h={88}>
            <SubHeader>
              样式
              <ChevronUp size={16} strokeWidth={3} color="#1a7391" />
            </SubHeader>
            <FieldRow $h={20} $mt={7}>
              颜色
              <Swatch />
            </FieldRow>
            <FieldRow $h={26} $mt={3}>
              宽度
              <WidthSelect>
                <WidthLine />
                <WidthText>0.13 mm</WidthText>
                <Tri />
              </WidthSelect>
            </FieldRow>
          </Sub>
        </Card>

        <Footer>
          <FootButton>确定</FootButton>
          <FootButton>应用</FootButton>
          <FootButton $on>取消</FootButton>
        </Footer>
      </DialogBody>
    </Dialog>

    <Overlay width="1033" height="873" viewBox="0 0 1033 873" fill="none">
      <path d="M373 47L533 299" stroke="#e2202c" strokeWidth="4.500" strokeLinecap="round" />
      <ellipse cx="335" cy="31" rx="45" ry="14.500" stroke="#7a0a2a" strokeWidth="4.500" />
    </Overlay>
  </Page>
);

export default App;
